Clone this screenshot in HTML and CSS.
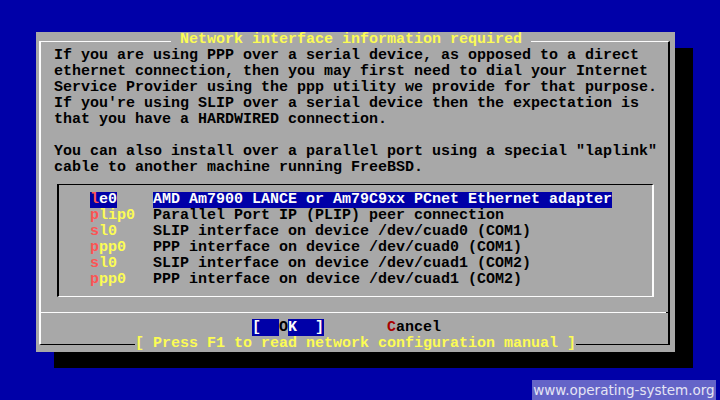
FILE: index.html
```html
<!DOCTYPE html>
<html lang="en">
<head>
    <meta charset="UTF-8">
    <meta name="viewport" content="width=device-width, initial-scale=1.0">
    <title>sysinstall - Network interface</title>
    <link rel="stylesheet" href="styles.css">
</head>
<body>

    <div class="screen">

        <!-- dialog box -->
        <div class="dialog">
            <h1 class="title">Network interface information required</h1>

            <div class="frame">
                <p class="msg">If you are using PPP over a serial device, as opposed to a direct<br>ethernet connection, then you may first need to dial your Internet<br>Service Provider using the ppp utility we provide for that purpose.<br>If you're using SLIP over a serial device then the expectation is<br>that you have a HARDWIRED connection.</p>
                <p class="msg gap">You can also install over a parallel port using a special "laplink"<br>cable to another machine running FreeBSD.</p>

                <!-- interface list -->
                <ul class="menu">
                    <li class="item current"><span class="tag"><b>l</b>e0</span><span class="desc">AMD Am7900 LANCE or Am79C9xx PCnet Ethernet adapter</span></li>
                    <li class="item"><span class="tag"><b>p</b>lip0</span><span class="desc">Parallel Port IP (PLIP) peer connection</span></li>
                    <li class="item"><span class="tag"><b>s</b>l0</span><span class="desc">SLIP interface on device /dev/cuad0 (COM1)</span></li>
                    <li class="item"><span class="tag"><b>p</b>pp0</span><span class="desc">PPP interface on device /dev/cuad0 (COM1)</span></li>
                    <li class="item"><span class="tag"><b>s</b>l0</span><span class="desc">SLIP interface on device /dev/cuad1 (COM2)</span></li>
                    <li class="item"><span class="tag"><b>p</b>pp0</span><span class="desc">PPP interface on device /dev/cuad1 (COM2)</span></li>
                </ul>

                <!-- buttons -->
                <div class="buttons">
                    <span class="btn ok">[  <span class="cursor">O</span>K  ]</span><span class="btn cancel"><b>C</b>ancel</span>
                </div>
            </div>

            <div class="hint">[ Press F1 to read network configuration manual ]</div>
        </div>

        <div class="watermark">www.operating-system.org</div>
    </div>

</body>
</html>
```

FILE: styles.css
```css
body, html {
    margin: 0;
    padding: 0;
    background-color: #0000a8; /* console blue */
}

.screen {
    position: relative;
    width: 720px;
    height: 400px;
    overflow: hidden;
    padding-top: 32px;
    box-sizing: border-box;
    font-family: "Liberation Mono", "DejaVu Sans Mono", monospace;
    font-size: 15px;
    font-weight: bold;
    line-height: 16px;
    color: #000;
}

/* grey box with the black drop shadow */
.dialog {
    position: relative;
    width: 639px;
    height: 320px;
    margin-left: 36px;
    padding: 9px 5px 7px 3px;
    box-sizing: border-box;
    background-color: #a8a8a8;
    box-shadow: 18px 16px 0 #000;
}

.frame {
    height: 100%;
    box-sizing: border-box;
    padding-top: 6px;
    border-left: 2px solid #fcfcfc;
    border-top: 1px solid #fcfcfc;
    border-right: 2px solid #000;
    border-bottom: 1px solid #000;
}

/* texts sitting on the border lines */
.title, .hint {
    position: absolute;
    margin: 0;
    font-size: 15px;
    font-weight: bold;
    line-height: 16px;
    color: #fcfc54;
    background-color: #a8a8a8;
    white-space: pre;
}

.title {
    top: 0;
    left: 135px;
    padding: 0 9px;
}

.hint {
    top: 304px;
    left: 99px;
}

.msg {
    margin: 0 0 0 13px;
    white-space: nowrap;
}

.msg.gap {
    margin-top: 16px;
}

/* sunken list box */
.menu {
    list-style: none;
    width: 597px;
    margin: 8px 0 0 16px;
    padding: 7px 0 8px 31px;
    box-sizing: border-box;
    border-left: 2px solid #000;
    border-top: 1px solid #000;
    border-right: 2px solid #fcfcfc;
    border-bottom: 1px solid #fcfcfc;
}

.item {
    display: flex;
    height: 16px;
    white-space: pre;
}

.tag {
    width: 63px;
    color: #fcfc54;
}

.tag b {
    color: #fc5454;
}

.current .tag {
    width: auto;
    margin-right: 36px;
    color: #fcfcfc;
    background-color: #0000a8;
}

.current .desc {
    color: #fcfcfc;
    background-color: #0000a8;
}

/* separator + buttons */
.buttons {
    position: relative;
    margin-top: 15px;
    padding-top: 7px;
    border-top: 1px solid #fcfcfc;
    height: 16px;
}

.buttons::after {
    content: "";
    position: absolute;
    right: 0;
    top: -1px;
    width: 2px;
    height: 1px;
    background-color: #000;
}

.btn {
    white-space: pre;
}

.ok {
    margin-left: 211px;
    color: #fcfcfc;
    background-color: #0000a8;
}

.cursor {
    color: #000;
    background-color: #a8a8a8;
}

.cancel {
    margin-left: 63px;
}

.cancel b {
    color: #a80000;
}

.watermark {
    position: absolute;
    right: 4px;
    bottom: 0;
    width: 184px;
    height: 20px;
    background-color: #6464c8;
    color: #e4e4f4;
    font-family: "DejaVu Sans", Verdana, sans-serif;
    font-size: 13.5px;
    font-weight: normal;
    line-height: 20px;
    text-align: center;
}
```
